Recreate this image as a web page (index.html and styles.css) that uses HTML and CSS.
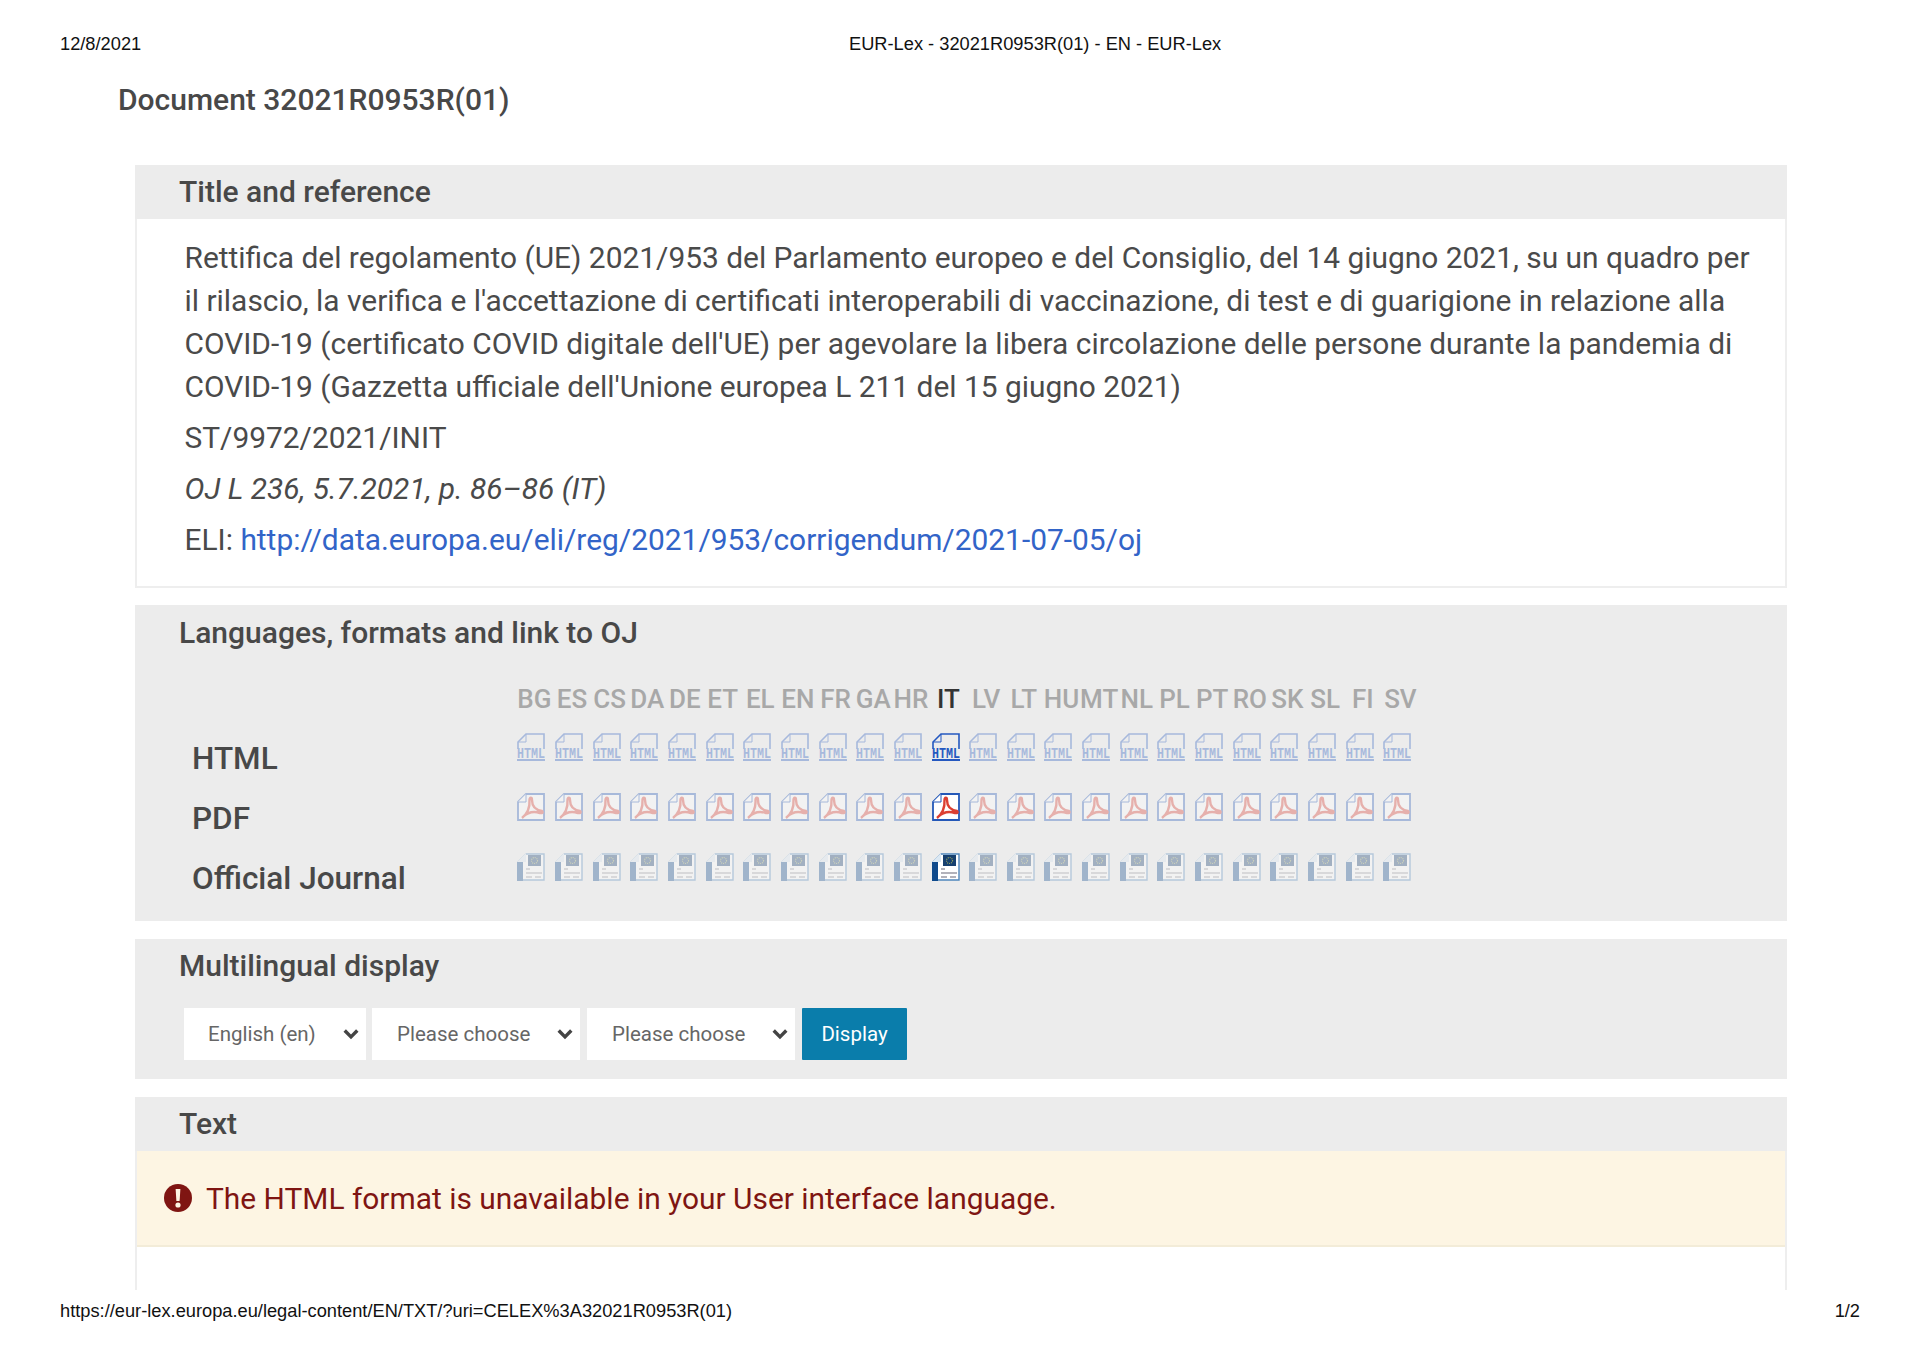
FILE: index.html
```html
<!DOCTYPE html>
<html lang="en">
<head>
<meta charset="utf-8">
<title>EUR-Lex - 32021R0953R(01) - EN - EUR-Lex</title>
<link rel="stylesheet" href="styles.css">
</head>
<body>
<svg class="defs" width="0" height="0" aria-hidden="true">
  <symbol id="i-html" viewBox="0 0 28 28">
    <path d="M1 16V9L9 1H27V16" fill="none" stroke="#2458c0" stroke-width="1.6"/>
    <path d="M9 1V9H1" fill="none" stroke="#2458c0" stroke-width="1"/>
    <text x="0" y="24.5" textLength="28" lengthAdjust="spacingAndGlyphs" class="icon-label">HTML</text>
    <rect x="0" y="26" width="28" height="2" fill="#2458c0"/>
  </symbol>
  <symbol id="i-pdf" viewBox="0 0 28 28">
    <path d="M1 9L9 1H27V27H1Z" fill="#ffffff" stroke="#2458b8" stroke-width="1.8"/>
    <path d="M9 1V9H1" fill="#fff" stroke="#2458b8" stroke-width="1"/>
    <path d="M5 25C10 21 13 15 12.5 7C12.5 4 15 4 15 7C15 13 18.5 17 25 18C26.5 19.5 25 20.5 23 20C17 18 11 19 6 24" fill="none" stroke="#dc3f32" stroke-width="2.4"/>
  </symbol>
  <symbol id="i-oj" viewBox="0 0 28 28">
    <path d="M1 9L9 1H27V27H1Z" fill="#ffffff" stroke="#4f86bc" stroke-width="1.4"/>
    <path d="M0 9H6V28H0Z" fill="#0f4a8c"/>
    <path d="M0 9L9 0V9Z" fill="#dbe8f3"/>
    <rect x="11" y="2" width="13" height="11" fill="#17406f"/>
    <circle cx="17.5" cy="7.5" r="3" fill="none" stroke="#9aa860" stroke-width="1.2" stroke-dasharray="1 1"/>
    <path d="M9 16H13M9 20H25M9 24H15M18 24H24" stroke="#667" stroke-width="1.2"/>
  </symbol>
</svg>

<header class="print-head">
  <span class="print-date">12/8/2021</span>
  <span class="print-title">EUR-Lex - 32021R0953R(01) - EN - EUR-Lex</span>
</header>

<main class="page">
  <h1 class="doc-title">Document 32021R0953R(01)</h1>

  <section class="panel panel-title">
    <h2 class="panel-head">Title and reference</h2>
    <div class="panel-body">
      <p class="lead">Rettifica del regolamento (UE) 2021/953 del Parlamento europeo e del Consiglio, del 14 giugno 2021, su un quadro per il rilascio, la verifica e l'accettazione di certificati interoperabili di vaccinazione, di test e di guarigione in relazione alla COVID-19 (certificato COVID digitale dell'UE) per agevolare la libera circolazione delle persone durante la pandemia di COVID-19 (Gazzetta ufficiale dell'Unione europea L 211 del 15 giugno 2021)</p>
      <p class="meta">ST/9972/2021/INIT</p>
      <p class="meta"><em>OJ L 236, 5.7.2021, p. 86–86 (IT)</em></p>
      <p class="meta">ELI: <a class="eli" href="#">http://data.europa.eu/eli/reg/2021/953/corrigendum/2021-07-05/oj</a></p>
    </div>
  </section>

  <section class="panel panel-grey panel-lang">
    <h2 class="panel-head">Languages, formats and link to OJ</h2>
    <div class="lang-table">
      <div class="lang-row lang-codes">
        <span class="row-label"></span>
        <span class="cell">BG</span><span class="cell">ES</span><span class="cell">CS</span><span class="cell">DA</span><span class="cell">DE</span><span class="cell">ET</span><span class="cell">EL</span><span class="cell">EN</span><span class="cell">FR</span><span class="cell">GA</span><span class="cell">HR</span><span class="cell on">IT</span><span class="cell">LV</span><span class="cell">LT</span><span class="cell">HU</span><span class="cell">MT</span><span class="cell">NL</span><span class="cell">PL</span><span class="cell">PT</span><span class="cell">RO</span><span class="cell">SK</span><span class="cell">SL</span><span class="cell">FI</span><span class="cell">SV</span>
      </div>
      <div class="lang-row">
        <span class="row-label">HTML</span>
        <svg class="ico"><use href="#i-html"/></svg><svg class="ico"><use href="#i-html"/></svg><svg class="ico"><use href="#i-html"/></svg><svg class="ico"><use href="#i-html"/></svg><svg class="ico"><use href="#i-html"/></svg><svg class="ico"><use href="#i-html"/></svg><svg class="ico"><use href="#i-html"/></svg><svg class="ico"><use href="#i-html"/></svg><svg class="ico"><use href="#i-html"/></svg><svg class="ico"><use href="#i-html"/></svg><svg class="ico"><use href="#i-html"/></svg><svg class="ico on"><use href="#i-html"/></svg><svg class="ico"><use href="#i-html"/></svg><svg class="ico"><use href="#i-html"/></svg><svg class="ico"><use href="#i-html"/></svg><svg class="ico"><use href="#i-html"/></svg><svg class="ico"><use href="#i-html"/></svg><svg class="ico"><use href="#i-html"/></svg><svg class="ico"><use href="#i-html"/></svg><svg class="ico"><use href="#i-html"/></svg><svg class="ico"><use href="#i-html"/></svg><svg class="ico"><use href="#i-html"/></svg><svg class="ico"><use href="#i-html"/></svg><svg class="ico"><use href="#i-html"/></svg>
      </div>
      <div class="lang-row">
        <span class="row-label">PDF</span>
        <svg class="ico"><use href="#i-pdf"/></svg><svg class="ico"><use href="#i-pdf"/></svg><svg class="ico"><use href="#i-pdf"/></svg><svg class="ico"><use href="#i-pdf"/></svg><svg class="ico"><use href="#i-pdf"/></svg><svg class="ico"><use href="#i-pdf"/></svg><svg class="ico"><use href="#i-pdf"/></svg><svg class="ico"><use href="#i-pdf"/></svg><svg class="ico"><use href="#i-pdf"/></svg><svg class="ico"><use href="#i-pdf"/></svg><svg class="ico"><use href="#i-pdf"/></svg><svg class="ico on"><use href="#i-pdf"/></svg><svg class="ico"><use href="#i-pdf"/></svg><svg class="ico"><use href="#i-pdf"/></svg><svg class="ico"><use href="#i-pdf"/></svg><svg class="ico"><use href="#i-pdf"/></svg><svg class="ico"><use href="#i-pdf"/></svg><svg class="ico"><use href="#i-pdf"/></svg><svg class="ico"><use href="#i-pdf"/></svg><svg class="ico"><use href="#i-pdf"/></svg><svg class="ico"><use href="#i-pdf"/></svg><svg class="ico"><use href="#i-pdf"/></svg><svg class="ico"><use href="#i-pdf"/></svg><svg class="ico"><use href="#i-pdf"/></svg>
      </div>
      <div class="lang-row">
        <span class="row-label">Official Journal</span>
        <svg class="ico"><use href="#i-oj"/></svg><svg class="ico"><use href="#i-oj"/></svg><svg class="ico"><use href="#i-oj"/></svg><svg class="ico"><use href="#i-oj"/></svg><svg class="ico"><use href="#i-oj"/></svg><svg class="ico"><use href="#i-oj"/></svg><svg class="ico"><use href="#i-oj"/></svg><svg class="ico"><use href="#i-oj"/></svg><svg class="ico"><use href="#i-oj"/></svg><svg class="ico"><use href="#i-oj"/></svg><svg class="ico"><use href="#i-oj"/></svg><svg class="ico on"><use href="#i-oj"/></svg><svg class="ico"><use href="#i-oj"/></svg><svg class="ico"><use href="#i-oj"/></svg><svg class="ico"><use href="#i-oj"/></svg><svg class="ico"><use href="#i-oj"/></svg><svg class="ico"><use href="#i-oj"/></svg><svg class="ico"><use href="#i-oj"/></svg><svg class="ico"><use href="#i-oj"/></svg><svg class="ico"><use href="#i-oj"/></svg><svg class="ico"><use href="#i-oj"/></svg><svg class="ico"><use href="#i-oj"/></svg><svg class="ico"><use href="#i-oj"/></svg><svg class="ico"><use href="#i-oj"/></svg>
      </div>
    </div>
  </section>

  <section class="panel panel-grey panel-multi">
    <h2 class="panel-head">Multilingual display</h2>
    <div class="controls">
      <div class="select sel-lang">English (en)<svg class="chev" viewBox="0 0 14 10"><path d="M1.5 2L7 7.5L12.5 2" fill="none" stroke="#444" stroke-width="3"/></svg></div>
      <div class="select sel-choose">Please choose<svg class="chev" viewBox="0 0 14 10"><path d="M1.5 2L7 7.5L12.5 2" fill="none" stroke="#444" stroke-width="3"/></svg></div>
      <div class="select sel-choose">Please choose<svg class="chev" viewBox="0 0 14 10"><path d="M1.5 2L7 7.5L12.5 2" fill="none" stroke="#444" stroke-width="3"/></svg></div>
      <button class="btn" type="button">Display</button>
    </div>
  </section>

  <section class="panel panel-text">
    <h2 class="panel-head">Text</h2>
    <div class="alert">
      <svg class="alert-ico" viewBox="0 0 28 28"><circle cx="14" cy="14" r="14" fill="#7f1512"/><path d="M11.6 5H16.4L15.6 17H12.4Z" fill="#fdf5e3"/><circle cx="14" cy="21" r="2.6" fill="#fdf5e3"/></svg>
      <span>The HTML format is unavailable in your User interface language.</span>
    </div>
  </section>
</main>

<footer class="print-foot">
  <span>https://eur-lex.europa.eu/legal-content/EN/TXT/?uri=CELEX%3A32021R0953R(01)</span>
  <span>1/2</span>
</footer>
</body>
</html>
```
FILE: styles.css
```css
* { box-sizing: border-box; }
html, body { margin: 0; padding: 0; }
body {
  width: 1920px;
  height: 1356px;
  overflow: hidden;
  background: #fff;
  color: #4a4a4a;
  font-family: Roboto, sans-serif;
  display: flex;
  flex-direction: column;
}
.defs { position: absolute; }
.print-head {
  position: relative;
  height: 34px;
  margin-top: 27px;
  padding-left: 60px;
  font: 18.25px/34px "Liberation Sans", sans-serif;
  color: #111;
  flex: none;
}
.print-title { position: absolute; left: 849px; top: 0; }
.page { flex: 1; display: flex; flex-direction: column; min-height: 0; overflow: hidden; }
.doc-title {
  margin: 0 0 0 118px;
  font-size: 30px;
  line-height: 40px;
  font-weight: 500;
  color: #484848;
  height: 104px;
  padding-top: 19px;
  flex: none;
}
.panel {
  margin: 0 133px 0 135px;
  flex: none;
}
.panel-head {
  margin: 0;
  padding-left: 44px;
  font-size: 30px;
  line-height: 53px;
  font-weight: 500;
  color: #484848;
}
.panel-title { margin-bottom: 17px; }
.panel-title .panel-head, .panel-text .panel-head { background: #ececec; height: 54px; }
.panel-body {
  border: 2px solid #eee;
  border-top: 0;
  padding: 17px 28px 14px 47.5px;
  height: 369px;
  font-size: 29.9px;
  line-height: 43px;
  color: #4a4a4a;
}
.panel-body p { margin: 0; }
.panel-body .lead { margin-bottom: 8px; }
.panel-body .meta { margin-bottom: 8px; }
.eli { color: #3264c8; text-decoration: none; }
.panel-grey { background: #ececec; }
.panel-lang { height: 316px; margin-bottom: 18px; padding-top: 1px; }
.lang-table { padding-top: 21px; }
.lang-row { display: flex; align-items: center; height: 60px; column-gap: 9.67px; }
.lang-row:nth-child(n+2) { margin-top: -1px; margin-bottom: 1px; }
.lang-codes { height: 38px; padding-left: 3px; }
.row-label {
  width: 382.3px;
  margin-right: -9.67px;
  padding-left: 57px;
  font-size: 31.5px;
  font-weight: 500;
  color: #484848;
  flex: none;
  position: relative;
  top: 11px;
}
.cell {
  width: 28px;
  flex: none;
  font-size: 26px;
  font-weight: 500;
  color: #a8a8a8;
  display: flex;
  justify-content: center;
  white-space: nowrap;
}
.cell.on { color: #333; }
.ico { width: 28px; height: 28px; flex: none; opacity: .34; }
.ico.on { opacity: 1; }
.icon-label { font: bold 14px "Liberation Mono", monospace; fill: #2458c0; }
.panel-multi { height: 140px; margin-bottom: 18px; }
.controls { display: flex; padding: 16px 0 0 49px; }
.select {
  height: 52px;
  background: #fff;
  display: flex;
  align-items: center;
  font-size: 20.5px;
  color: #666;
  justify-content: space-between;
}
.sel-lang { width: 182px; padding: 0 7px 0 24px; margin-right: 6px; }
.sel-choose { width: 208px; padding: 0 7px 0 25px; margin-right: 7px; }
.chev { width: 16px; height: 12px; }
.btn {
  width: 105px;
  height: 52px;
  border: 0;
  border-radius: 1px;
  background: #0a7dab;
  color: #fff;
  font: 20.5px Roboto, sans-serif;
}
.panel-text {
  flex: 1;
  border-left: 2px solid #eee;
  border-right: 2px solid #eee;
  min-height: 195px;
}
.panel-text .panel-head { margin: 0 -2px; }
.alert {
  height: 96px;
  background: #fdf5e3;
  border-bottom: 2px solid #f3ecd8;
  display: flex;
  align-items: center;
  padding-left: 27px;
  color: #7f1512;
  font-size: 29.9px;
  column-gap: 14px;
}
.alert-ico { width: 28px; height: 28px; flex: none; }
.print-foot {
  flex: none;
  display: flex;
  justify-content: space-between;
  height: 66px;
  padding: 6px 60px 0 60px;
  background: #fff;
  font: 18.25px/30px "Liberation Sans", sans-serif;
  color: #111;
}
```
